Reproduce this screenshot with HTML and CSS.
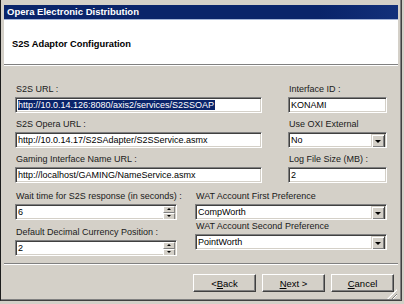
FILE: index.html
```html
<!DOCTYPE html>
<html lang="en">
<head>
  <meta charset="UTF-8" />
  <title>Opera Electronic Distribution</title>
  <link rel="stylesheet" href="styles.css">
</head>
<body>
  <div class="window">
    <div class="titlebar">Opera Electronic Distribution</div>

    <div class="client">
      <div class="banner">
        <h1>S2S Adaptor Configuration</h1>
      </div>

      <div class="form">
        <div class="grid-top">
          <div class="field">
            <label>S2S URL :</label>
            <div class="box"><span class="selected">http://10.0.14.126:8080/axis2/services/S2SSOAP</span></div>
          </div>
          <div class="field">
            <label>Interface ID :</label>
            <div class="box">KONAMI</div>
          </div>

          <div class="field">
            <label>S2S Opera URL :</label>
            <div class="box">http://10.0.14.17/S2SAdapter/S2SService.asmx</div>
          </div>
          <div class="field">
            <label>Use OXI External</label>
            <div class="box combo">No<span class="drop"><i></i></span></div>
          </div>

          <div class="field">
            <label>Gaming Interface Name URL :</label>
            <div class="box">http://localhost/GAMING/NameService.asmx</div>
          </div>
          <div class="field">
            <label>Log File Size (MB) :</label>
            <div class="box">2</div>
          </div>
        </div>

        <div class="lower">
          <div class="col-left">
            <div class="field">
              <label>Wait time for S2S response (in seconds) :</label>
              <div class="box spin">6<span class="spinner"><b class="up"></b><b class="down"></b></span></div>
            </div>
            <div class="field">
              <label>Default Decimal Currency Position :</label>
              <div class="box spin">2<span class="spinner"><b class="up"></b><b class="down"></b></span></div>
            </div>
          </div>
          <div class="col-right">
            <div class="field">
              <label>WAT Account First Preference</label>
              <div class="box combo">CompWorth<span class="drop"><i></i></span></div>
            </div>
            <div class="field">
              <label>WAT Account Second Preference</label>
              <div class="box combo">PointWorth<span class="drop"><i></i></span></div>
            </div>
          </div>
        </div>
      </div>

      <div class="footer">
        <button>&lt;<u>B</u>ack</button>
        <button><u>N</u>ext &gt;</button>
        <button><u>C</u>ancel</button>
        <span class="grip"></span>
      </div>
    </div>
  </div>
</body>
</html>
```

FILE: styles.css
```css
body {
  margin: 0;
  background: #d4d0c8;
  font-family: 'Liberation Sans', Arial, sans-serif;
  font-size: 9px;
  color: #000;
}

.window {
  width: 394px;
  height: 295px;
  padding: 5px 3px 0 3px;
  border-left: 1px solid #1c1c1c;
  border-right: 1px solid #404040;
  border-bottom: 1px solid #404040;
  box-shadow: inset -1px -1px 0 #808080;
  background: #d4d0c8;
  display: flex;
  flex-direction: column;
}

.titlebar {
  height: 14px;
  line-height: 14px;
  padding-left: 3px;
  background: linear-gradient(to right, #0a246a 80%, #12307a);
  color: #fff;
  font-weight: bold;
  font-size: 9.5px;
  border-bottom: 1px solid #a6b6d8;
}

.client {
  flex: 1;
  display: flex;
  flex-direction: column;
}

.banner {
  height: 44px;
  background: #fff;
  border-bottom: 1px solid #808080;
  box-shadow: 0 1px 0 #fff;
  display: flex;
  align-items: center;
  padding-left: 8px;
}

.banner h1 {
  margin: 3px 0 0;
  font-size: 9.3px;
  font-weight: bold;
}

.form {
  padding: 18px 0 0 11px;
}

.grid-top {
  display: grid;
  grid-template-columns: 247px 99px;
  column-gap: 26px;
  row-gap: 5px;
}

.field label {
  display: block;
  height: 12px;
  line-height: 12px;
  padding-left: 1px;
  color: #1a1a1a;
  white-space: nowrap;
}

.box {
  position: relative;
  height: 14px;
  line-height: 14px;
  margin-top: 2px;
  padding-left: 2px;
  background: #fff;
  border: 1px solid;
  border-color: #808080 #fff #fff #808080;
  box-shadow: inset 1px 1px 0 #404040, inset -1px -1px 0 #d4d0c8;
  white-space: nowrap;
  overflow: hidden;
}

.selected {
  background: #0a246a;
  color: #fff;
  padding-right: 1px;
}

.drop {
  position: absolute;
  top: 1px;
  right: 1px;
  width: 12px;
  height: 12px;
  background: #d4d0c8;
  border: 1px solid;
  border-color: #d4d0c8 #404040 #404040 #d4d0c8;
  box-shadow: inset 1px 1px 0 #fff, inset -1px -1px 0 #808080;
}

.drop i {
  position: absolute;
  left: 3px;
  top: 5px;
  border-left: 3px solid transparent;
  border-right: 3px solid transparent;
  border-top: 3px solid #000;
}

.spinner {
  position: absolute;
  top: 1px;
  right: 1px;
  width: 12px;
  height: 14px;
  display: flex;
  flex-direction: column;
}

.spinner b {
  flex: 1;
  position: relative;
  background: #d4d0c8;
  border: 1px solid;
  border-color: #fff #808080 #808080 #fff;
}

.spinner b::after {
  content: "";
  position: absolute;
  left: 3px;
  border-left: 2px solid transparent;
  border-right: 2px solid transparent;
}

.spinner .up::after {
  top: 1px;
  border-bottom: 2px solid #000;
}

.spinner .down::after {
  top: 1px;
  border-top: 2px solid #000;
}

.lower {
  display: flex;
  gap: 18px;
  margin-top: 7px;
}

.col-left {
  width: 162px;
  display: flex;
  flex-direction: column;
  gap: 6px;
}

.col-right {
  width: 192px;
  display: flex;
  flex-direction: column;
}

.footer {
  position: relative;
  margin-top: 7px;
  border-top: 1px solid #808080;
  box-shadow: inset 0 1px 0 #fff;
  padding: 10px 0 0 189px;
  display: flex;
  gap: 6px;
  flex: 1;
}

.footer button {
  width: 63px;
  height: 18px;
  padding: 0;
  font-family: 'Liberation Sans', Arial, sans-serif;
  font-size: 9.5px;
  color: #000;
  background: #d4d0c8;
  border: 1px solid;
  border-color: #fff #404040 #404040 #fff;
  box-shadow: inset -1px -1px 0 #808080;
}

.grip {
  position: absolute;
  right: 1px;
  bottom: 1px;
  width: 10px;
  height: 10px;
  background: repeating-linear-gradient(135deg, transparent 0 2px, #808080 2px 3px, #fff 3px 4px);
  clip-path: polygon(100% 0, 100% 100%, 0 100%);
}
```
